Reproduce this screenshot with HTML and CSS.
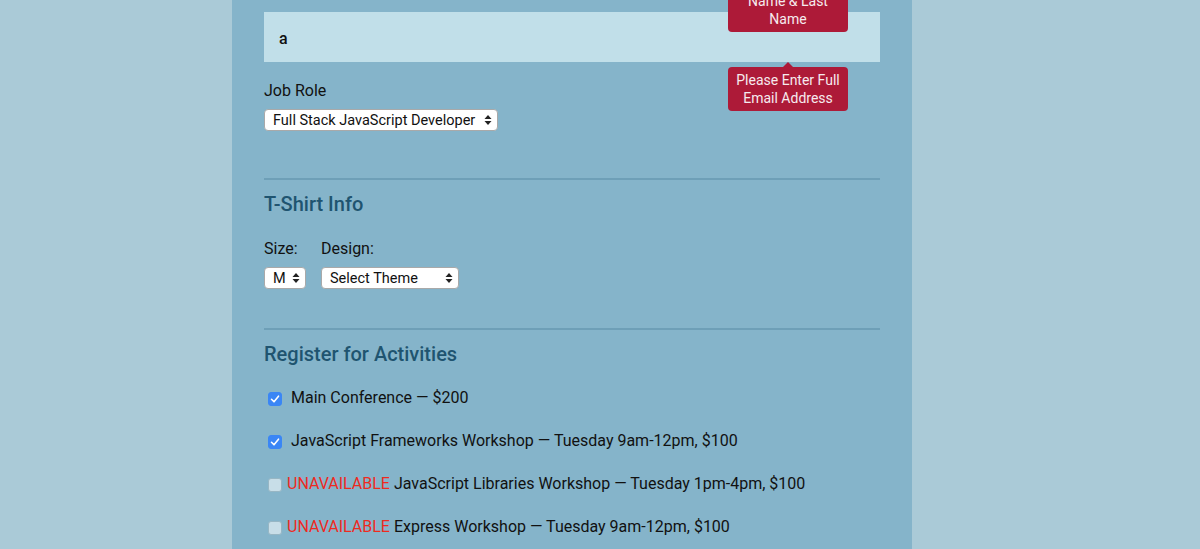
FILE: index.html
```html
<!DOCTYPE html>
<html lang="en">
<head>
<meta charset="utf-8">
<title>Registration</title>
<link rel="stylesheet" href="styles.css">
</head>
<body>
<div class="page">
  <form class="form">
    <div class="field email-field">
      <input class="text-input" type="text" value="a">
      <div class="tip tip-name">Name &amp; Last<br>Name</div>
      <div class="tip tip-email">Please Enter Full<br>Email Address</div>
    </div>
    <label class="label job-label">Job Role</label>
    <select class="select job-select"><option>Full Stack JavaScript Developer</option></select>

    <div class="section shirt-section">
      <h2 class="heading">T-Shirt Info</h2>
      <div class="shirt-row">
        <div class="shirt-col">
          <label class="label">Size:</label>
          <select class="select size-select"><option>M</option></select>
        </div>
        <div class="shirt-col">
          <label class="label">Design:</label>
          <select class="select theme-select"><option>Select Theme</option></select>
        </div>
      </div>
    </div>

    <div class="section activities-section">
      <h2 class="heading">Register for Activities</h2>
      <div class="activities">
        <label class="activity"><input type="checkbox" class="check" checked><span class="act-text">Main Conference — $200</span></label>
        <label class="activity"><input type="checkbox" class="check" checked><span class="act-text">JavaScript Frameworks Workshop — Tuesday 9am-12pm, $100</span></label>
        <label class="activity unavailable"><input type="checkbox" class="check"><span class="act-text"><span class="flag">UNAVAILABLE</span> JavaScript Libraries Workshop — Tuesday 1pm-4pm, $100</span></label>
        <label class="activity unavailable"><input type="checkbox" class="check"><span class="act-text"><span class="flag">UNAVAILABLE</span> Express Workshop — Tuesday 9am-12pm, $100</span></label>
      </div>
    </div>
  </form>
</div>
</body>
</html>
```
FILE: styles.css
```css
html, body {
  margin: 0;
  padding: 0;
  background: #aacad7;
  font-family: Roboto, "Liberation Sans", sans-serif;
  color: #111;
  overflow: hidden;
}
.page {
  width: 680px;
  margin: 0 0 0 232px;
  background: #85b4ca;
  min-height: 549px;
}
.form {
  padding: 12px 32px 12px;
}
.field {
  position: relative;
}
.text-input {
  display: block;
  box-sizing: border-box;
  width: 100%;
  height: 50px;
  border: 0;
  background: #c1dfe9;
  padding: 2px 15px 0;
  font-family: Roboto, "Liberation Sans", sans-serif;
  font-size: 16px;
  font-weight: 500;
  color: #111;
  outline: none;
}
.tip {
  position: absolute;
  left: 464px;
  width: 120px;
  box-sizing: border-box;
  padding: 4px 4px;
  background: #ad1a38;
  color: #f6eaee;
  font-size: 14px;
  line-height: 18px;
  text-align: center;
  border-radius: 4px;
}
.tip::before {
  content: "";
  position: absolute;
  top: -5px;
  left: 55px;
  border-left: 5px solid transparent;
  border-right: 5px solid transparent;
  border-bottom: 5px solid #ad1a38;
}
.tip-name {
  top: -24px;
}
.tip-email {
  top: 55px;
}
.label {
  display: block;
  font-size: 16px;
  line-height: 20px;
  color: #111;
}
.job-label {
  margin-top: 19px;
  margin-bottom: 8px;
}
.select {
  display: block;
  -webkit-appearance: none;
  appearance: none;
  box-sizing: border-box;
  height: 22px;
  padding: 1px 14px 0 8px;
  border: 1px solid #a9a9a9;
  border-radius: 4px;
  background-color: #fff;
  background-image: url("data:image/svg+xml;utf8,<svg xmlns='http://www.w3.org/2000/svg' width='8' height='12' viewBox='0 0 8 12'><path d='M4 1 L7.5 5 H0.5 Z M4 11 L7.5 7 H0.5 Z' fill='%23222'/></svg>");
  background-repeat: no-repeat;
  background-position: right 5px center;
  font-family: Roboto, "Liberation Sans", sans-serif;
  font-size: 14.5px;
  line-height: 19px;
  color: #111;
  outline: none;
}
.job-select {
  width: 234px;
}
.section {
  border-top: 2px solid #6e9fb7;
}
.shirt-section {
  margin-top: 47px;
}
.activities-section {
  margin-top: 39px;
}
.heading {
  margin: 12px 0 0;
  font-size: 20px;
  line-height: 24px;
  font-weight: 500;
  color: #1f5470;
}
.shirt-row {
  display: flex;
  gap: 15px;
  margin-top: 23px;
}
.shirt-col {
  display: flex;
  flex-direction: column;
  gap: 8px;
}
.size-select {
  width: 42px;
}
.theme-select {
  width: 138px;
}
.activities {
  display: flex;
  flex-direction: column;
  gap: 23px;
  margin-top: 22px;
}
.activity {
  display: flex;
  align-items: center;
  height: 20px;
  font-size: 16px;
  line-height: 20px;
}
.check {
  -webkit-appearance: none;
  appearance: none;
  box-sizing: border-box;
  width: 14px;
  height: 14px;
  margin: 1px 9px 0 4px;
  border-radius: 3px;
  border: 1px solid #97b6c4;
  background: #c8dee8;
  flex: none;
}
.check:checked {
  border-color: #3a86f5;
  background-color: #3a86f5;
  background-image: url("data:image/svg+xml;utf8,<svg xmlns='http://www.w3.org/2000/svg' width='14' height='14' viewBox='0 0 14 14'><path d='M3.5 7.3 L6 9.8 L10.5 4.2' fill='none' stroke='white' stroke-width='1.6' stroke-linecap='round' stroke-linejoin='round'/></svg>");
  background-repeat: no-repeat;
  background-position: center;
}
.unavailable .check {
  margin-right: 5px;
}
.flag {
  color: #ee2a1f;
}
```
